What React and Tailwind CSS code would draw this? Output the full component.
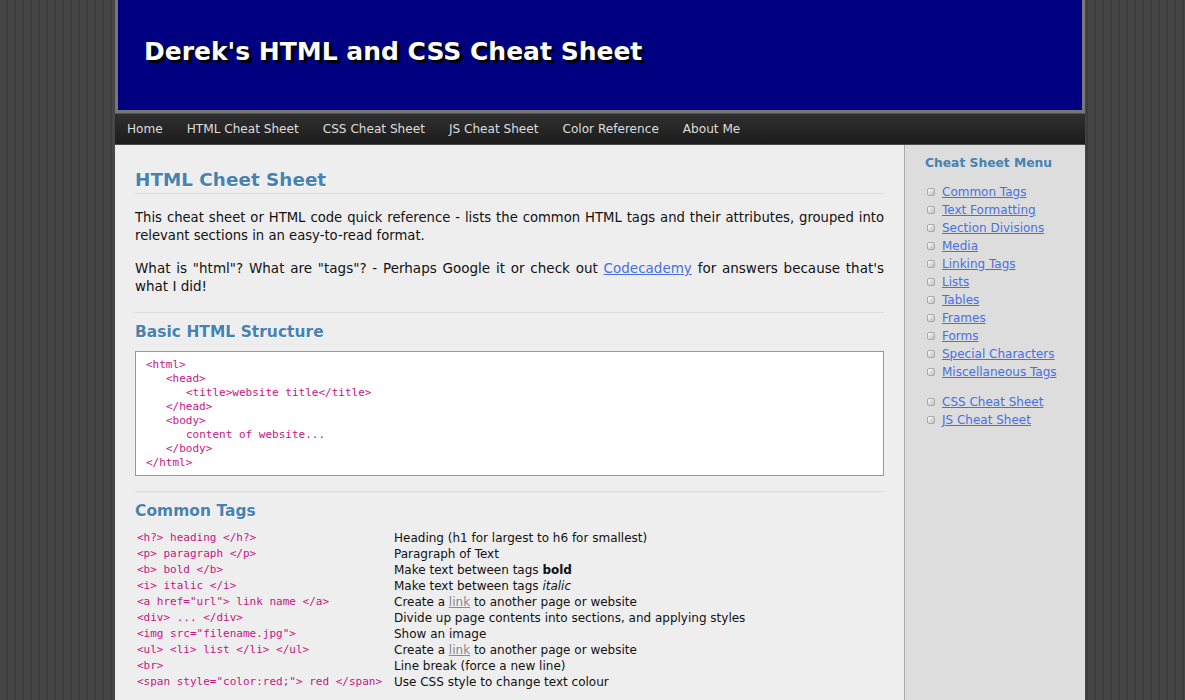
import React from "react";

const navItems = ["Home", "HTML Cheat Sheet", "CSS Cheat Sheet", "JS Cheat Sheet", "Color Reference", "About Me"];

const menuMain = [
  "Common Tags",
  "Text Formatting",
  "Section Divisions",
  "Media",
  "Linking Tags",
  "Lists",
  "Tables",
  "Frames",
  "Forms",
  "Special Characters",
  "Miscellaneous Tags",
];

const commonTags = [
  ["<h?> heading </h?>", <>Heading (h1 for largest to h6 for smallest)</>],
  ["<p> paragraph </p>", <>Paragraph of Text</>],
  ["<b> bold </b>", <>Make text between tags <b>bold</b></>],
  ["<i> italic </i>", <>Make text between tags <i>italic</i></>],
  ['<a href="url"> link name </a>', <>Create a <a href="#" className="text-[#888] underline">link</a> to another page or website</>],
  ["<div> ... </div>", <>Divide up page contents into sections, and applying styles</>],
  ['<img src="filename.jpg">', <>Show an image</>],
  ["<ul> <li> list </li> </ul>", <>Create a <a href="#" className="text-[#888] underline">link</a> to another page or website</>],
  ["<br>", <>Line break (force a new line)</>],
  ['<span style="color:red;"> red </span>', <>Use CSS style to change text colour</>],
];

const codeLines = [
  [0, "<html>"],
  [1, "<head>"],
  [2, "<title>website title</title>"],
  [1, "</head>"],
  [1, "<body>"],
  [2, "content of website..."],
  [1, "</body>"],
  [0, "</html>"],
];

const indent = ["pl-0", "pl-5", "pl-10"];

function Bullet() {
  return (
    <span className="mr-[7px] inline-block h-[8px] w-[8px] shrink-0 rounded-[2px] border border-[#aaa] bg-gradient-to-br from-white to-[#bbb]" />
  );
}

function MenuLink({ label }) {
  return (
    <li className="flex h-[18px] items-center">
      <Bullet />
      <a href="#" className="text-[#4a6fe0] underline">{label}</a>
    </li>
  );
}

function SectionHeading({ children }) {
  return (
    <h2 className="text-[15.5px] font-bold leading-[22px] text-[#4682b4] [text-shadow:1px_1px_0_#fff]">{children}</h2>
  );
}

export default function App() {
  return (
    <div className="min-h-[700px] bg-[repeating-linear-gradient(90deg,#464646_0,#464646_6px,#3c3c3c_6px,#3c3c3c_8px)] font-['DejaVu_Sans',Verdana,sans-serif]">
      <div className="ml-[115px] w-[970px]">
        <header className="flex h-[113px] items-center border-x-[3px] border-b-[3px] border-[#777] bg-[#000080] pl-[26px]">
          <h1 className="mt-[-6px] text-[25px] font-bold text-white [text-shadow:3px_3px_1px_#000]">
            Derek's HTML and CSS Cheat Sheet
          </h1>
        </header>

        <nav className="flex h-[32px] items-center border-t border-[#555] border-b border-b-[#4a4a4a] bg-gradient-to-b from-[#303030] to-[#1c1c1c]">
          {navItems.map((n) => (
            <a key={n} href="#" className="px-3 text-[12.1px] text-[#ddd]">{n}</a>
          ))}
        </nav>

        <div className="flex min-h-[555px]">
          <main className="w-[789px] bg-[#eee] px-5 pt-[23px] text-[13.5px] leading-[18px] text-[#111]">
            <h1 className="border-b border-[#ddd] pb-[1px] text-[18.4px] font-bold leading-[24px] text-[#4682b4] [text-shadow:1px_1px_0_#fff]">
              HTML Cheet Sheet
            </h1>
            <p className="mt-[15px] text-justify text-[13.2px]">
              This cheat sheet or HTML code quick reference - lists the common HTML tags and their attributes, grouped into relevant sections in an easy-to-read format.
            </p>
            <p className="mt-[14px] text-justify">
              What is "html"? What are "tags"? - Perhaps Google it or check out{" "}
              <a href="#" className="text-[#4a6fe0] underline">Codecademy</a> for answers because that's what I did!
            </p>

            <hr className="mt-[17px] border-[#ddd]" />
            <div className="mt-[8px]">
              <SectionHeading>Basic HTML Structure</SectionHeading>
            </div>
            <div className="mt-[8px] h-[125px] border border-[#999] bg-white px-[10px] pt-[6px] font-['DejaVu_Sans_Mono',monospace] text-[11px] leading-[14px] text-[#c71585]">
              {codeLines.map(([lvl, t], i) => (
                <div key={i} className={indent[lvl]}>{t}</div>
              ))}
            </div>

            <hr className="mt-[15px] border-[#ddd]" />
            <div className="mt-[8px]">
              <SectionHeading>Common Tags</SectionHeading>
            </div>
            <div className="mt-[8px] text-[12px]">
              {commonTags.map(([code, desc], i) => (
                <div key={i} className="flex h-[16px] items-center">
                  <span className="w-[259px] pl-[2px] font-['DejaVu_Sans_Mono',monospace] text-[11px] text-[#c71585]">{code}</span>
                  <span>{desc}</span>
                </div>
              ))}
            </div>
          </main>

          <aside className="w-[181px] border-l border-[#aaa] bg-[#ddd] pl-5 pt-[9px] text-[12px]">
            <h3 className="text-[12.3px] font-bold leading-[18px] text-[#4682b4]">Cheat Sheet Menu</h3>
            <ul className="mt-[11px] pl-[2px]">
              {menuMain.map((m) => (
                <MenuLink key={m} label={m} />
              ))}
            </ul>
            <ul className="mt-[12px] pl-[2px]">
              <MenuLink label="CSS Cheat Sheet" />
              <MenuLink label="JS Cheat Sheet" />
            </ul>
          </aside>
        </div>
      </div>
    </div>
  );
}
